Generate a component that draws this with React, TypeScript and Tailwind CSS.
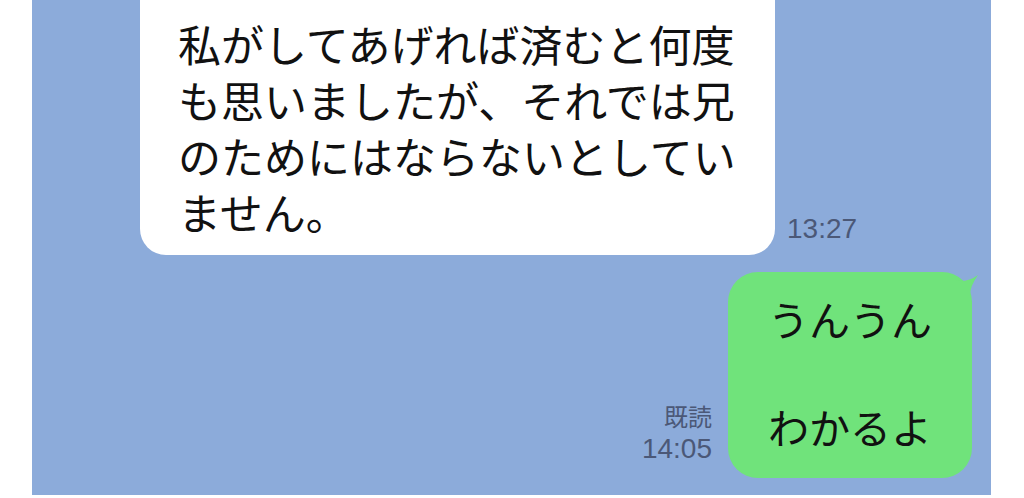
const jp = "font-['Noto_Sans_CJK_JP',sans-serif]";

const lines = [
  "私がしてあげれば済むと何度",
  "も思いましたが、それでは兄",
  "のためにはならないとしてい",
  "ません。",
];

export default function App() {
  return (
    <div className="w-[1024px] h-[498px] bg-white pl-[32px]">
      <div className="w-[959px] h-[495px] bg-[#8cabda] flex flex-col">
        {/* incoming message */}
        <div className="flex items-end pl-[108px] gap-[12px]">
          <div
            className={`w-[635px] bg-white rounded-b-[26px] pt-[15px] pb-[16px] pl-[38px] text-[43px] leading-[56px] text-[#111] ${jp}`}
          >
            {lines.map((l) => (
              <div key={l} className="whitespace-nowrap">
                {l}
              </div>
            ))}
          </div>
          <span className="mb-[11px] text-[28px] leading-[30px] text-[#4b5877] font-['Liberation_Sans',sans-serif]">
            13:27
          </span>
        </div>

        {/* outgoing message */}
        <div className="flex justify-end items-end mt-[17px] pr-[19px] gap-[16px]">
          <div className="flex flex-col items-end mb-[12px] text-[#4b5877]">
            <span className={`text-[24px] leading-[32px] ${jp}`}>既読</span>
            <span className="text-[28px] leading-[34px] font-['Liberation_Sans',sans-serif]">14:05</span>
          </div>
          <div
            className={`relative w-[244px] bg-[#70e37b] rounded-[30px] pt-[19px] pb-[25px] pl-[40px] text-[41px] leading-[54px] text-[#111] ${jp}`}
          >
            <svg
              className="absolute left-[214px] top-0"
              width="40"
              height="36"
              viewBox="0 0 40 36"
            >
              <path
                d="M0 0 Q10 8 18 9 Q28 9 36 3 Q28 14 28 24 Q29 30 30 32 L30 36 L0 36 Z"
                fill="#70e37b"
              />
            </svg>
            <div className="relative">うんうん</div>
            <div className="relative h-[54px]" />
            <div className="relative">わかるよ</div>
          </div>
        </div>
      </div>
    </div>
  );
}
